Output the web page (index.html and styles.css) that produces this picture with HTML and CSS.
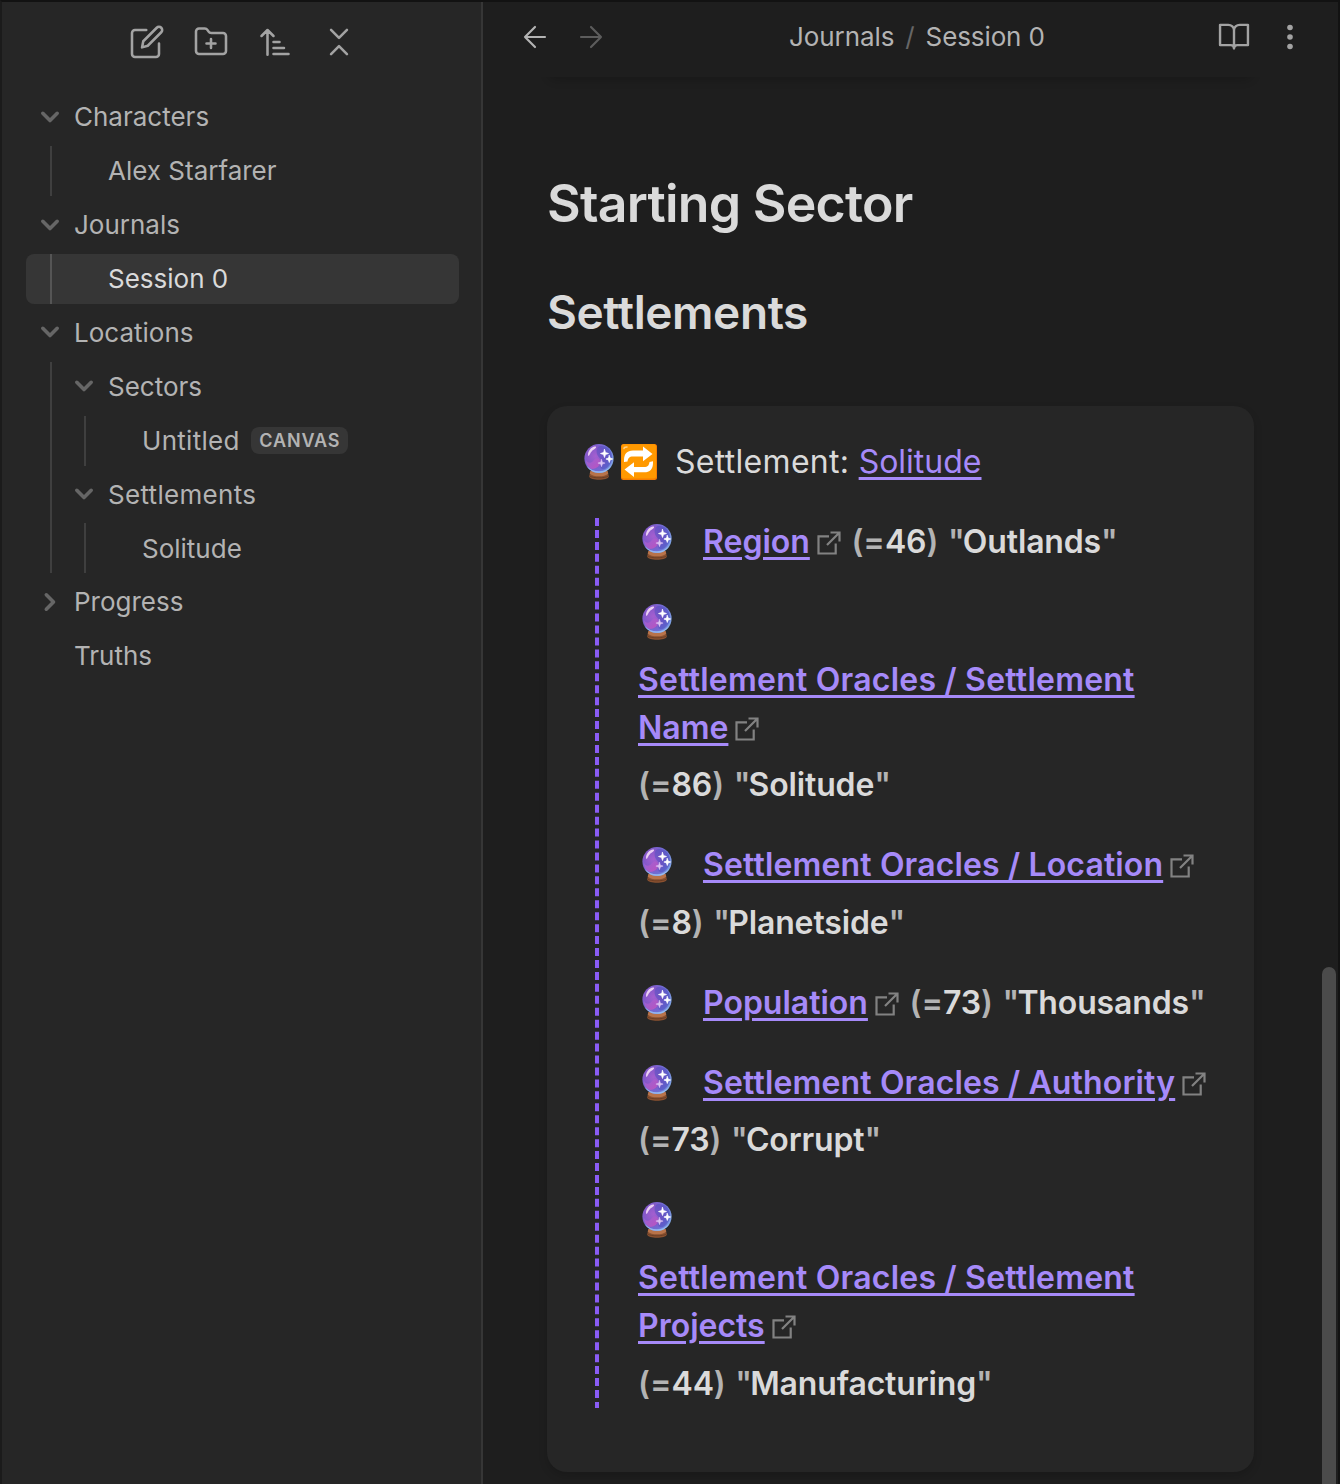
FILE: index.html
```html
<!DOCTYPE html>
<html lang="en">
<head>
<meta charset="utf-8">
<title>Session 0</title>
<link rel="stylesheet" href="styles.css">
</head>
<body>
<svg class="defs" width="0" height="0" aria-hidden="true">
  <defs>
    <radialGradient id="glass" cx="38%" cy="42%" r="66%">
      <stop offset="0" stop-color="#a45fd0"/>
      <stop offset=".5" stop-color="#8458c9"/>
      <stop offset=".78" stop-color="#6d6fd4"/>
      <stop offset="1" stop-color="#86b6ee"/>
    </radialGradient>
    <linearGradient id="swirl" x1="0" y1="0" x2="1" y2="1">
      <stop offset="0" stop-color="#9a63d6"/>
      <stop offset="1" stop-color="#c653bd"/>
    </linearGradient>
    <symbol id="orb" viewBox="0 0 36 38">
      <path d="M9.5 28h17l1.4 5.5c-.6 2.2-5 3.3-9.9 3.3s-9.300-1.100-9.900-3.300z" fill="#8a5130"/>
      <path d="M9.500 28h17l.8 2.500c-2 2-5.500 2.800-9.300 2.800s-7.300-.8-9.300-2.800z" fill="#b8734a"/>
      <path d="M9 33.200c3 2.300 15 2.300 18 0" fill="none" stroke="#5e3520" stroke-width=".7"/>
      <circle cx="18" cy="15.500" r="14.600" fill="url(#glass)"/>
      <path d="M19 3c7-1 12 5 12 11s-3 10-7 12c-4 1-6-2-4-6s-3-5-4-9 0-7 3-8z" fill="#4b4fc0" opacity=".5"/>
      <path d="M5 17c2 4 6 3 8 0s6-2 6 2-4 7-8 7c-4-1-6-5-6-9z" fill="url(#swirl)" opacity=".85"/>
      <path d="M11 28.200c4 2.200 10 2.200 14 0 2-1 4-3 5-5-3 3-7 5-12 5s-9-2-12-5c1 2 3 4 5 5z" fill="#9dc4f4" opacity=".8"/>
      <path d="M7 12c0-4 3-8 7-8.500 2 0 1 2-1 3s-3 2.500-4 4.500-2 2.500-2 1z" fill="#f5dcf8" opacity=".9"/>
      <path d="M23.500 6.500l1 3 3 1-3 1-1 3-1-3-3-1 3-1zM28.300 12.500l.9 2.600 2.500.9-2.500.9-.9 2.600-.9-2.600-2.500-.9 2.500-.9z" fill="#fff" stroke="#fff" stroke-width=".7"/>
      <path d="M20.500 16.500l.9 2.700 2.700.9-2.700.9-.9 2.700-.9-2.700-2.700-.9 2.700-.9z" fill="#dcc4f5" stroke="#dcc4f5" stroke-width=".5"/>
    </symbol>
    <symbol id="repeat" viewBox="0 0 38 38">
      <rect x="1" y="1" width="36" height="36" rx="2.500" fill="#f57c00"/>
      <rect x="1.500" y="1.300" width="34.500" height="34.200" rx="2.500" fill="#ff9900"/>
      <path d="M4 5.500q0-1.500 3-1.500" stroke="#ffd08a" stroke-width="1.500" fill="none" stroke-linecap="round"/>
      <path d="M4 17c0-6 3-9.500 9-9.500h10V3.500L32.500 11 23 18.300V13.500H13c-4 0-5 2-5.500 5L4 19z" fill="#fff"/>
      <path d="M33 20c0 6-3 9.300-9 9.300H14v4.700L4.500 26.500 14 19.200V24h10c4 0 5-2 5.500-5l3.500-.8z" fill="#fff"/>
    </symbol>
    <symbol id="down" viewBox="0 0 24 24"><path d="M4.800 8.300l7.200 7.200 7.200-7.200"/></symbol>
    <symbol id="ext" viewBox="0 0 24 24"><path d="M12 5.300H1.500V22.500H18.700V12.500M13.500 1.500h9V10.500M22.500 1.500L10 14"/></symbol>
  </defs>
</svg>
<div class="app">
  <aside class="sidebar">
    <div class="tools">
      <svg viewBox="0 0 24 24"><path d="M11.500 4H4a2 2 0 0 0-2 2v14a2 2 0 0 0 2 2h14a2 2 0 0 0 2-2v-7"/><path d="M18.500 2.500a2.120 2.120 0 0 1 3 3L12.500 14.500 8.700 15.600 9.500 11.500z"/></svg>
      <svg viewBox="0 0 24 24"><path d="M4 20h16a2 2 0 0 0 2-2V8a2 2 0 0 0-2-2h-7.930a2 2 0 0 1-1.660-.9l-.820-1.200A2 2 0 0 0 7.930 3H4a2 2 0 0 0-2 2v13c0 1.100.9 2 2 2ZM12 10v6M9 13h6"/></svg>
      <svg viewBox="0 0 24 24"><path d="M11 12h4M11 16h7M11 20h10M3 8l4-4 4 4M7 4v16.500"/></svg>
      <svg viewBox="0 0 24 24"><path d="M6.700 3.900l5.300 5.300 5.300-5.300M6.700 20.100l5.300-5.300 5.300 5.300"/></svg>
    </div>
    <nav class="tree">
      <div class="row"><svg class="chev"><use href="#down"/></svg>Characters</div>
      <div class="kids"><div class="row">Alex Starfarer</div></div>
      <div class="row"><svg class="chev"><use href="#down"/></svg>Journals</div>
      <div class="kids active"><div class="row">Session 0</div></div>
      <div class="row"><svg class="chev"><use href="#down"/></svg>Locations</div>
      <div class="kids">
        <div class="row"><svg class="chev"><use href="#down"/></svg>Sectors</div>
        <div class="kids"><div class="row"><span class="wide">Untitled</span><span class="tag">CANVAS</span></div></div>
        <div class="row"><svg class="chev"><use href="#down"/></svg><span class="wide">Settlements</span></div>
        <div class="kids"><div class="row">Solitude</div></div>
      </div>
      <div class="row"><svg class="chev closed"><use href="#down"/></svg>Progress</div>
      <div class="row">Truths</div>
    </nav>
  </aside>
  <main class="pane">
    <header class="bar">
      <svg class="nav" viewBox="0 0 24 24"><path d="M19.500 12H4.500M12 19.500L4.500 12 12 4.500"/></svg>
      <svg class="nav dim" viewBox="0 0 24 24"><path d="M4.500 12h15M12 4.500l7.500 7.500-7.500 7.500"/></svg>
      <div class="crumbs"><span>Journals</span><span class="slash">/</span><span>Session 0</span></div>
      <svg class="book" viewBox="0 0 24 24"><path d="M12 19.600a2.200 2.200 0 0 0-2.200-2.200H2.700V3.900h5.500A3.800 3.400 0 0 1 12 7.300V19.600a2.200 2.200 0 0 1 2.200-2.200h7.100V3.900h-5.500A3.800 3.400 0 0 0 12 7.300"/></svg>
      <svg class="dots" viewBox="0 0 8 26"><circle cx="4" cy="3.500" r="2.800"/><circle cx="4" cy="13" r="2.800"/><circle cx="4" cy="22.500" r="2.800"/></svg>
    </header>
    <div class="scroll">
      <article class="note">
        <div class="above"></div>
        <h1>Starting Sector</h1>
        <h2>Settlements</h2>
        <section class="card">
          <div class="head"><svg class="emoji orb"><use href="#orb"/></svg><svg class="emoji"><use href="#repeat"/></svg><span class="title"><span class="wide">Settlement: </span><a>Solitude</a></span></div>
          <div class="moves">
            <svg class="rule" width="4" height="890"><path d="M2 0V890"/></svg>
            <div class="list">
              <div class="move"><svg class="emoji"><use href="#orb"/></svg><span class="link"><a>Region</a><svg class="ext"><use href="#ext"/></svg></span><span class="res">(=<b>46</b>) <span class="q">"</span><b>Outlands</b>"</span></div>
              <div class="move"><svg class="emoji"><use href="#orb"/></svg><span class="link full"><a><span class="path two">Settlement Oracles / Settlement</span><br>Name</a><svg class="ext"><use href="#ext"/></svg></span><span class="res">(=<b>86</b>) <span class="q">"</span><b>Solitude</b>"</span></div>
              <div class="move"><svg class="emoji"><use href="#orb"/></svg><span class="link"><a class="path">Settlement Oracles / Location</a><svg class="ext"><use href="#ext"/></svg></span><span class="res">(=<b>8</b>) <span class="q">"</span><b>Planetside</b>"</span></div>
              <div class="move"><svg class="emoji"><use href="#orb"/></svg><span class="link"><a>Population</a><svg class="ext"><use href="#ext"/></svg></span><span class="res">(=<b>73</b>) <span class="q">"</span><b>Thousands</b>"</span></div>
              <div class="move"><svg class="emoji"><use href="#orb"/></svg><span class="link"><a class="path">Settlement Oracles / Authority</a><svg class="ext"><use href="#ext"/></svg></span><span class="res">(=<b>73</b>) <span class="q">"</span><b>Corrupt</b>"</span></div>
              <div class="move"><svg class="emoji"><use href="#orb"/></svg><span class="link full"><a><span class="path two">Settlement Oracles / Settlement</span><br>Projects</a><svg class="ext"><use href="#ext"/></svg></span><span class="res">(=<b>44</b>) <span class="q">"</span><b>Manufacturing</b>"</span></div>
            </div>
          </div>
        </section>
      </article>
      <div class="track"><div class="thumb"></div></div>
    </div>
  </main>
</div>
</body>
</html>
```
FILE: styles.css
```css
* { box-sizing: border-box; }
body {
  margin: 0;
  background: #1e1e1e;
  color: #dadada;
  font-family: Inter, "Liberation Sans", sans-serif;
}
svg { display: block; flex: none; fill: none; stroke-linecap: round; stroke-linejoin: round; }
.defs { position: absolute; }
.app {
  display: flex;
  height: 1484px;
  overflow: hidden;
  border-top: 2px solid #121212;
  border-left: 2px solid #1b1b1b;
  border-right: 2px solid #121212;
}

.sidebar {
  width: 481px;
  flex: none;
  background: #262626;
  border-right: 2px solid #363636;
  padding: 22px 22px 0 24px;
}
.tools { display: flex; gap: 28px; padding-left: 103px; height: 36px; margin-bottom: 32.300px; }
.tools svg { width: 36px; height: 36px; stroke: #a3a3a3; stroke-width: 1.700; }
.tree { color: #b3b3b3; font-size: 26px; line-height: 31px; }
.row {
  display: flex;
  align-items: center;
  height: 50px;
  margin-bottom: 3.891px;
  padding-left: 48px;
  padding-bottom: .800px;
  white-space: nowrap;
}
.chev { width: 24px; height: 24px; margin: 0 12px 0 -36px; stroke: #666; stroke-width: 3.600; }
.closed { transform: rotate(-90deg); }
.kids { position: relative; padding-left: 34px; }
.kids::before {
  content: "";
  position: absolute;
  left: 24px;
  top: 0;
  bottom: 0;
  width: 2px;
  background: #3f3f3f;
}
.active { color: #dadada; margin-bottom: 3.891px; background: #363636; border-radius: 8px; }
.active .row { margin-bottom: 0; }
.active::before { background: #555; }
.wide { letter-spacing: .3px; }
.tag {
  margin-left: 11.500px;
  padding: 0 8px;
  line-height: 27px;
  border-radius: 8px;
  background: #363636;
  font-size: 18px;
  font-weight: 600;
  letter-spacing: .85px;
}

.pane { flex: 1; min-width: 0; display: flex; flex-direction: column; }
.bar { display: flex; align-items: center; height: 75px; padding: 0 44px 5px 36px; }
.nav { width: 32px; height: 32px; margin-right: 24px; stroke: #b3b3b3; stroke-width: 1.600; }
.dim { stroke: #5c5c5c; }
.crumbs { flex: 1; display: flex; justify-content: center; gap: 11px; color: #b3b3b3; font-size: 26px; line-height: 31px; letter-spacing: -.1px; padding: 0 13px 1px 0; }
.slash { color: #666; }
.book { width: 36px; height: 36px; margin-right: 34px; stroke: #a3a3a3; stroke-width: 1.600; }
.dots { width: 8px; height: 26px; fill: #a3a3a3; }

.scroll { flex: 1; min-height: 0; display: flex; overflow: hidden; }
.note { flex: 1; min-width: 0; padding: 0 68px 0 64px; }
.above { height: 20px; margin-top: -20px; border-radius: 20px; box-shadow: 0 4px 8px rgba(0, 0, 0, .16); }
h1, h2 { margin: 0; font-weight: 600; line-height: 62px; }
h1 { font-size: 51.800px; padding-top: 95px; letter-spacing: -.75px; }
h2 { font-size: 46px; padding-top: 47px; letter-spacing: -.4px; }
.card {
  height: 1066px;
  margin-top: 63px;
  padding: 32px 36px;
  border-radius: 20px;
  background: #262626;
  box-shadow: 0 4px 8px rgba(0, 0, 0, .16);
  font-size: 32px;
  line-height: 48px;
  white-space: nowrap;
}
.emoji { width: 38px; height: 38px; }
.head { display: flex; align-items: center; height: 48px; margin-bottom: 32px; }
.head .emoji { margin-left: -1px; }
.head .orb { margin-left: -3px; margin-right: 3px; }
.title { margin-left: 17px; }
a { color: #a68af9; text-decoration: underline; text-decoration-thickness: 3px; text-underline-offset: 4px; }
.moves { display: flex; padding-left: 12px; gap: 39px; }
.rule { stroke: #8a5cf5; stroke-width: 4; stroke-dasharray: 8 3.945; stroke-linecap: butt; }
.list { width: 580px; display: flex; flex-direction: column; gap: 32px; font-weight: 600; }
.move { display: flex; flex-wrap: wrap; align-items: center; gap: 9.600px; }
.move .emoji { margin: 5px 17.400px 5px 0; }
.full { width: 100%; }
.path { letter-spacing: .14px; }
.two { letter-spacing: .22px; }
.ext { display: inline-block; width: 24px; height: 24px; margin: 0 1px 0 7px; vertical-align: -2px; stroke: #828282; stroke-width: 2.200; stroke-linecap: butt; stroke-linejoin: miter; }
.res { color: #b3b3b3; word-spacing: 1.500px; }
.res b { color: #dadada; font-weight: 600; letter-spacing: -.15px; }
.q { letter-spacing: -1.800px; }
.track { width: 16px; flex: none; padding-top: 890px; }
.thumb { width: 14px; height: 600px; border-radius: 7px; background: #4b4b4b; }
```
